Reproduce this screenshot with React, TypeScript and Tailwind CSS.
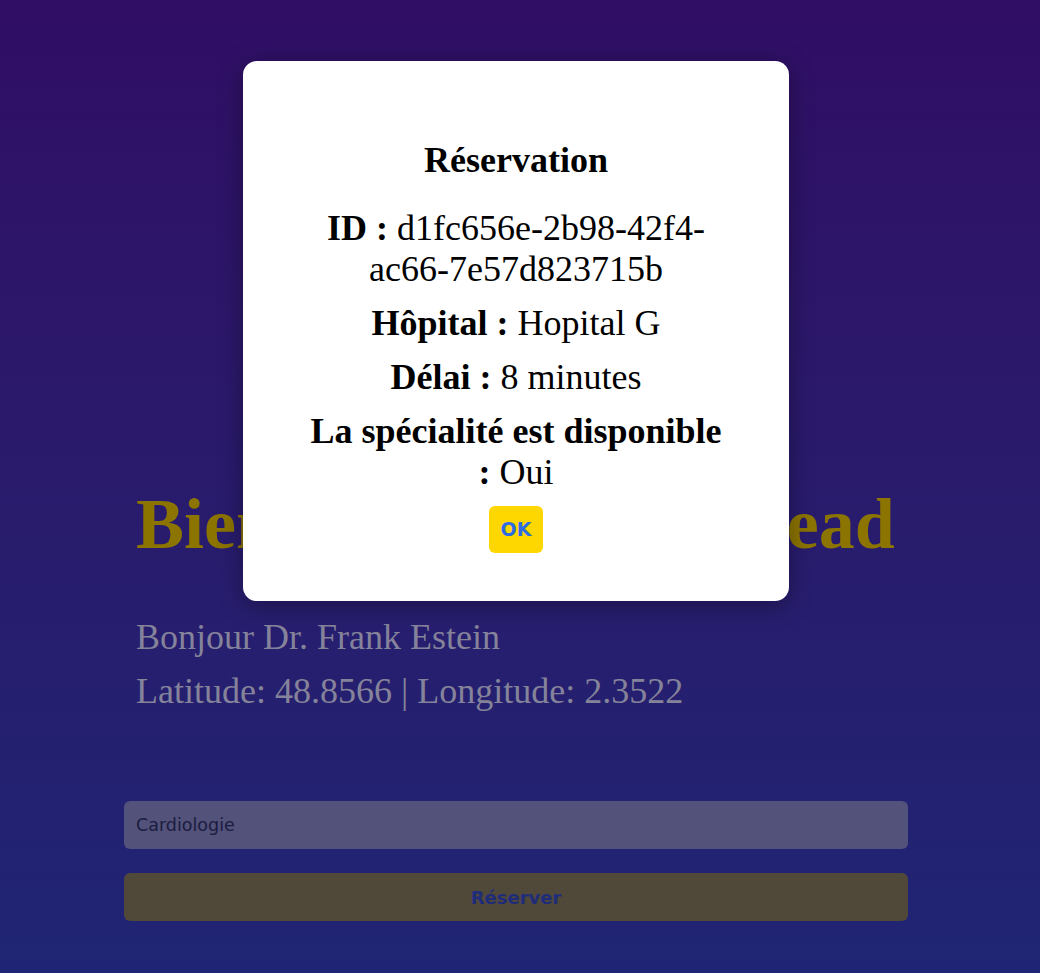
import { useState } from "react"

const serif = { fontFamily: '"Liberation Serif", "Times New Roman", serif' }
const sans = { fontFamily: '"DejaVu Sans", Verdana, sans-serif' }

function ReservationModal({ onClose }: { onClose: () => void }) {
    return (
        <div
            className="absolute left-[243px] top-[61px] w-[546px] h-[540px] bg-white rounded-[14px] shadow-[0_4px_24px_rgba(0,0,0,0.35)] flex flex-col items-center px-16 pt-[79px] text-black text-center"
            style={serif}
        >
            <h2 className="text-[36px] leading-[41px] font-bold mb-[27px]">Réservation</h2>
            <div className="flex flex-col items-center gap-[13px] text-[36px] leading-[41px]">
                <p><strong>ID :</strong> d1fc656e-2b98-42f4-ac66-7e57d823715b</p>
                <p><strong>Hôpital :</strong> Hopital G</p>
                <p><strong>Délai :</strong> 8 minutes</p>
                <p><strong>La spécialité est disponible :</strong> Oui</p>
                <button
                    onClick={onClose}
                    className="w-[54px] h-[47px] rounded-[6px] bg-[#ffd700] text-[#2f6ce2] text-[19px] font-bold flex items-center justify-center"
                    style={sans}
                >
                    OK
                </button>
            </div>
        </div>
    )
}

export default function App() {
    const [open, setOpen] = useState(true)
    const [specialty, setSpecialty] = useState("Cardiologie")

    return (
        <div className="relative min-h-[973px] w-full bg-linear-to-b from-[#300e65] to-[#1f2574] overflow-hidden">
            <div className="ml-[124px] w-[784px] pt-[483px]">
                {/* Header texts */}
                <div className="pl-3" style={serif}>
                    <h1 className="text-[72px] leading-[83px] font-bold text-[#8c7400]">Bienvenue sur MedHead</h1>
                    <div className="mt-[51px] flex flex-col gap-[13px] text-[36px] leading-[41px] text-[#85839a]">
                        <p>Bonjour Dr. Frank Estein</p>
                        <p>Latitude: 48.8566 | Longitude: 2.3522</p>
                    </div>
                </div>

                {/* Form */}
                <div className="mt-[89px] flex flex-col gap-6" style={sans}>
                    <input
                        value={specialty}
                        onChange={(e) => setSpecialty(e.target.value)}
                        className="h-12 w-full rounded-[6px] bg-[#52527a] px-3 text-[17.5px] text-[#1c1c40] outline-none"
                    />
                    <button className="h-12 w-full rounded-[6px] bg-[#50493a] text-[18px] font-bold text-[#1f2c7a]">
                        Réserver
                    </button>
                </div>
            </div>

            {open && <ReservationModal onClose={() => setOpen(false)} />}
        </div>
    )
}
